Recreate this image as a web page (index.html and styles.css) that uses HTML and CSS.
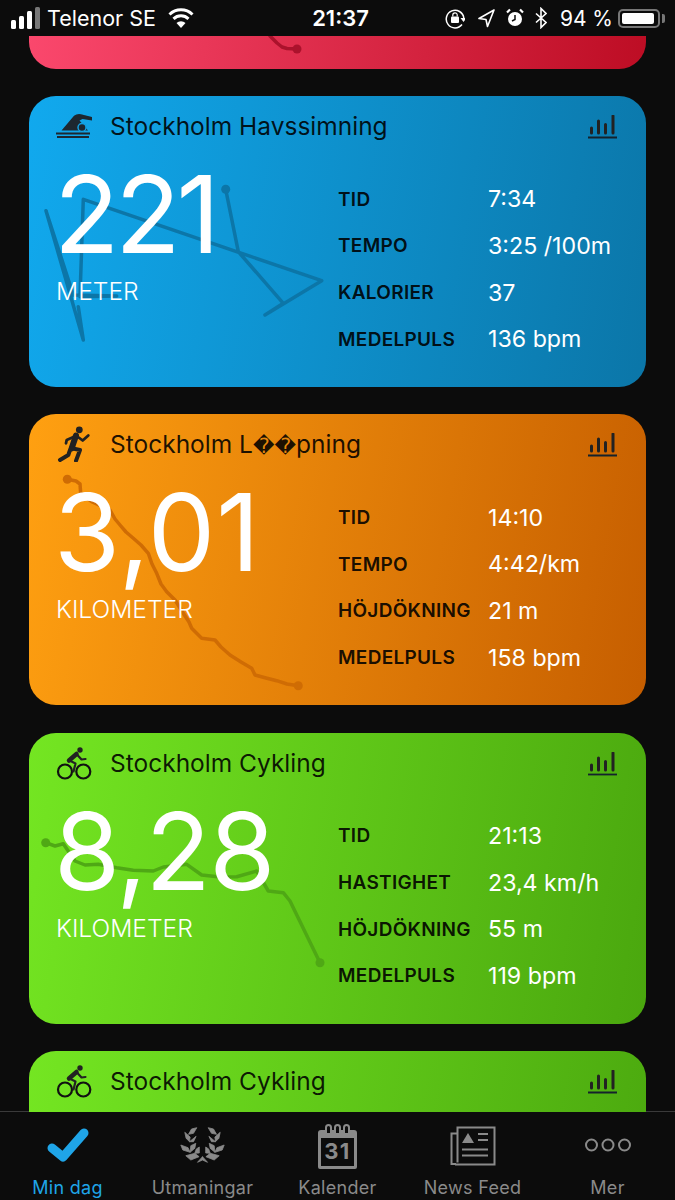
FILE: index.html
```html
<!DOCTYPE html>
<html lang="en">
<head>
    <meta charset="UTF-8">
    <meta name="viewport" content="width=device-width, initial-scale=1.0">
    <title>Min dag</title>
    <link rel="stylesheet" href="styles.css">
</head>
<body>
    <svg class="defs" width="0" height="0">
        <symbol id="chart" viewBox="0 0 30 24">
            <path d="M4.500 18v-5M11.500 18V6M18.500 18V9.500M26 18V1" fill="none" stroke="#222" stroke-width="3" stroke-linecap="round"/>
            <path d="M1 22.500h29" stroke="#14222c" stroke-width="1.800"/>
        </symbol>
        <symbol id="bike" viewBox="0 0 36 36">
            <circle cx="9" cy="26.500" r="7" fill="none" stroke="#111" stroke-width="2.200"/>
            <circle cx="27.300" cy="26.500" r="7" fill="none" stroke="#111" stroke-width="2.200"/>
            <circle cx="24" cy="5" r="2.700" fill="#222"/>
            <path d="M20.500 9L13 15.500" stroke="#222" stroke-width="4.500" stroke-linecap="round"/>
            <path d="M13.500 15.500l6 3-2 8M20.500 9l5 5.500 4-.5" fill="none" stroke="#222" stroke-width="2.200" stroke-linecap="round" stroke-linejoin="round"/>
        </symbol>
    </svg>

    <!-- Status bar -->
    <div class="status">
        <div class="status-left">
            <svg class="signal" width="30" height="24" viewBox="0 0 30 24">
                <rect x="0" y="14" width="5" height="9" rx="1.500" fill="#fff"/>
                <rect x="8" y="10" width="5" height="13" rx="1.500" fill="#fff"/>
                <rect x="16" y="5" width="5" height="18" rx="1.500" fill="#fff"/>
                <rect x="24" y="1" width="5" height="22" rx="1.500" fill="#777"/>
            </svg>
            <span class="carrier">Telenor SE</span>
            <svg class="wifi" width="26" height="22" viewBox="0 0 26 22">
                <path d="M1.500 7.500a16.500 16.500 0 0 1 23 0M5.500 11.800a11 11 0 0 1 15 0" fill="none" stroke="#fff" stroke-width="3"/>
                <path d="M13 21l-4.500-5a6.500 6.500 0 0 1 9 0z" fill="#fff"/>
            </svg>
        </div>
        <div class="clock">21:37</div>
        <div class="status-right">
            <svg class="lock" width="20" height="22" viewBox="0 0 20 22">
                <path d="M17 17.500A8.800 8.800 0 1 1 18.800 11" fill="none" stroke="#fff" stroke-width="1.500"/>
                <path d="M15.500 11h6l-3 4z" fill="#fff"/>
                <rect x="6" y="9.500" width="8" height="6.500" rx="1" fill="#fff"/>
                <path d="M7.800 9.500V8a2.200 2.200 0 0 1 4.400 0v1.500" fill="none" stroke="#fff" stroke-width="1.200"/>
            </svg>
            <svg class="locate" width="17" height="20" viewBox="0 0 17 20">
                <path d="M16 2L1 10.500l7 1 1.500 7z" fill="none" stroke="#fff" stroke-width="1.600" stroke-linejoin="round"/>
            </svg>
            <svg class="alarm" width="18" height="20" viewBox="0 0 18 20">
                <circle cx="9" cy="11" r="7" fill="#fff"/>
                <path d="M9 7v4.500l-3 1.500" fill="none" stroke="#0c0c0c" stroke-width="1.500"/>
                <path d="M1 4.500l3-3M17 4.500l-3-3" stroke="#fff" stroke-width="2.200"/>
            </svg>
            <svg class="bluetooth" width="12" height="22" viewBox="0 0 12 22">
                <path d="M1 6.500l10 9L6 20.500v-19l5 5-10 9" fill="none" stroke="#fff" stroke-width="1.600"/>
            </svg>
            <span class="percent">94 %</span>
            <div class="battery"><div class="battery-level"></div></div>
        </div>
    </div>

    <div class="feed">
        <div class="feed-list">

            <!-- Earlier activity, mostly scrolled away -->
            <div class="card card-red">
                <svg class="route" viewBox="0 0 617 291">
                    <path d="M241 258l7 7 5 4 5 1.500 10 .5" stroke="#ab122c"/>
                    <circle cx="268" cy="271" r="4.500" fill="#ab122c"/>
                </svg>
            </div>

            <!-- Swim -->
            <div class="card card-blue">
                <svg class="route" viewBox="0 0 617 291">
                    <path d="M196.700 93.300L209.300 155.700 254.300 207.300 236 219 292.700 184.700 54.300 103.300 51 200.700 87.700 200 44.300 199 17 114.700 54.300 244 49.300 210.700" stroke="#0c76a8"/>
                    <circle cx="196.700" cy="93.300" r="4.500" fill="#0c76a8"/>
                </svg>
                <div class="card-head">
                    <svg class="sport" viewBox="0 0 36 36">
                        <path d="M5.500 22.500L18 7.800Q21 5.400 25 6.200L36 9v3.500L26.500 11l-3 1.500L32 22.500z" fill="#1d2730"/>
                        <circle cx="26" cy="19.500" r="4" fill="#1d2730" stroke="#129fe0" stroke-width="1.500"/>
                        <path d="M0 25.500h34M1 29h32" stroke="#1d2730" stroke-width="1.800"/>
                    </svg>
                    <div class="card-title">Stockholm Havssimning</div>
                    <svg class="chart"><use href="#chart"/></svg>
                </div>
                <div class="card-body">
                    <div class="total">
                        <div class="total-value total-value-short">221</div>
                        <div class="total-unit">METER</div>
                    </div>
                    <div class="stats">
                        <div class="stat-label">TID</div><div class="stat-value">7:34</div>
                        <div class="stat-label">TEMPO</div><div class="stat-value">3:25 /100m</div>
                        <div class="stat-label">KALORIER</div><div class="stat-value">37</div>
                        <div class="stat-label">MEDELPULS</div><div class="stat-value">136 bpm</div>
                    </div>
                </div>
            </div>

            <!-- Run -->
            <div class="card card-orange">
                <svg class="route" viewBox="0 0 617 291">
                    <path d="M38.300 65.300L47 67 51 70 51.700 79.300 62.700 87.700 72 92 81 96 86 105 91 111 97 118 104.300 124.300 112 131 119.300 139.300 123 150 127.700 159.300 132 170 137.700 177.700 146 186 154.300 199.300 160 208 162.700 214.300 172.700 224.300 186 226 192 233 201 241 212 248 222.700 254.300 226 261 237 264 247.700 266.700 258 270 269.300 271.700" stroke="#cf6c04"/>
                    <circle cx="38.300" cy="65.300" r="4.500" fill="#cf6c04"/>
                    <circle cx="269.300" cy="271.700" r="4.500" fill="#cf6c04"/>
                </svg>
                <div class="card-head">
                    <svg class="sport" viewBox="0 0 36 36">
                        <circle cx="23.300" cy="3.800" r="3.400" fill="#222"/>
                        <path d="M20 9.500L15.700 22.300" stroke="#222" stroke-width="6" stroke-linecap="round"/>
                        <path d="M20 9.500l6.700 5 5.600-5M18 10.700L10.700 14 10 17.300" fill="none" stroke="#222" stroke-width="2.800" stroke-linecap="round" stroke-linejoin="round"/>
                        <path d="M15.700 22.300L24 24 20 34.700M14 24l-1.700 5L4 34" fill="none" stroke="#222" stroke-width="4" stroke-linecap="round" stroke-linejoin="round"/>
                    </svg>
                    <div class="card-title">Stockholm L<span class="bad-char">&#xFFFD;&#xFFFD;</span>pning</div>
                    <svg class="chart"><use href="#chart"/></svg>
                </div>
                <div class="card-body">
                    <div class="total">
                        <div class="total-value total-value-wide">3,01</div>
                        <div class="total-unit">KILOMETER</div>
                    </div>
                    <div class="stats">
                        <div class="stat-label">TID</div><div class="stat-value">14:10</div>
                        <div class="stat-label">TEMPO</div><div class="stat-value">4:42/km</div>
                        <div class="stat-label">HÖJDÖKNING</div><div class="stat-value">21 m</div>
                        <div class="stat-label">MEDELPULS</div><div class="stat-value">158 bpm</div>
                    </div>
                </div>
            </div>

            <!-- Ride -->
            <div class="card card-green">
                <svg class="route" viewBox="0 0 617 291">
                    <path d="M16.700 109.700L26 113 34.300 110.700 46 128 56 132 69.300 131.300 87.700 134.700 104.300 137.300 124.300 138 134.300 134 157.700 131.300 172.700 142 191 144 207.700 143.700 227.700 138 239.300 158 254.300 159.700 261 168 291 229.700" stroke="#4fa815"/>
                    <circle cx="16.700" cy="109.700" r="4.500" fill="#4fa815"/>
                    <circle cx="291" cy="229.700" r="4.500" fill="#4fa815"/>
                </svg>
                <div class="card-head">
                    <svg class="sport"><use href="#bike"/></svg>
                    <div class="card-title">Stockholm Cykling</div>
                    <svg class="chart"><use href="#chart"/></svg>
                </div>
                <div class="card-body">
                    <div class="total">
                        <div class="total-value">8,28</div>
                        <div class="total-unit">KILOMETER</div>
                    </div>
                    <div class="stats">
                        <div class="stat-label">TID</div><div class="stat-value">21:13</div>
                        <div class="stat-label">HASTIGHET</div><div class="stat-value">23,4 km/h</div>
                        <div class="stat-label">HÖJDÖKNING</div><div class="stat-value">55 m</div>
                        <div class="stat-label">MEDELPULS</div><div class="stat-value">119 bpm</div>
                    </div>
                </div>
            </div>

            <!-- Second ride, cut off by the tab bar -->
            <div class="card card-green">
                <div class="card-head">
                    <svg class="sport"><use href="#bike"/></svg>
                    <div class="card-title">Stockholm Cykling</div>
                    <svg class="chart"><use href="#chart"/></svg>
                </div>
            </div>
        </div>
    </div>

    <!-- Tab bar -->
    <div class="tabs">
        <div class="tab tab-active">
            <svg class="tab-icon" width="46" height="44" viewBox="0 0 46 44">
                <path d="M7 23l11 9L39 8" fill="none" stroke="#1fa5e8" stroke-width="9" stroke-linecap="round" stroke-linejoin="round"/>
            </svg>
            <span>Min dag</span>
        </div>
        <div class="tab">
            <svg class="tab-icon" width="45" height="44" viewBox="0 0 44.400 44">
                <g id="laurel" fill="#8a8a8a" stroke="#8a8a8a" stroke-width=".8" stroke-linejoin="round">
                    <path d="M16.500 2.700L11.200 4 8.200 9.300 13.200 8.300z"/>
                    <path d="M4.500 7.300L5.800 13.300 9.200 16.700 9.800 12z"/>
                    <path d="M9.200 16.700L15.800 11.300 13.200 16.700z"/>
                    <path d="M.5 20L2.500 25 9.800 27.300 7.800 22.700z"/>
                    <path d="M9.800 27.300L10.500 20.700 15.500 18.300 14.500 23.300z"/>
                    <path d="M5.500 30.700L10.500 35 18.800 31.700 14.500 28.300z"/>
                    <path d="M14.500 28.300L16 24 19 22 19 28z"/>
                    <path d="M17.200 37.300L22.200 31.700 22.200 35z"/>
                </g>
                <use href="#laurel" transform="matrix(-1 0 0 1 44.400 0)"/>
            </svg>
            <span>Utmaningar</span>
        </div>
        <div class="tab">
            <div class="cal">
                <div class="cal-rings"><i></i><i></i><i></i></div>
                <div class="cal-page">31</div>
            </div>
            <span>Kalender</span>
        </div>
        <div class="tab">
            <svg class="tab-icon" width="46" height="44" viewBox="0 0 46 44">
                <path d="M7.500 8.500H1.500v30.500h4.500M7.500 37.500V2.500h37v37H5" fill="none" stroke="#8a8a8a" stroke-width="2"/>
                <path d="M12 18l6-10 6 10z" fill="#8a8a8a"/>
                <path d="M28 9h10M28 15h10M12 24.500h26M12 30.500h26" stroke="#8a8a8a" stroke-width="2"/>
            </svg>
            <span>News Feed</span>
        </div>
        <div class="tab">
            <svg class="tab-icon" width="46" height="44" viewBox="0 0 46 44">
                <g fill="none" stroke="#8a8a8a" stroke-width="2">
                    <circle cx="6.500" cy="20" r="5.500"/>
                    <circle cx="23" cy="20" r="5.500"/>
                    <circle cx="39.500" cy="20" r="5.500"/>
                </g>
            </svg>
            <span>Mer</span>
        </div>
    </div>
</body>
</html>
```

FILE: styles.css
```css
body {
    margin: 0;
    height: 1200px;
    overflow: hidden;
    background-color: #0c0c0c;
    font-family: Inter, "DejaVu Sans", sans-serif;
    color: #fff;
}

.defs {
    position: absolute;
}

/* Status bar */
.status {
    height: 36px;
    display: grid;
    grid-template-columns: 1fr auto 1fr;
    align-items: center;
    padding: 0 10px 0 11px;
    font-size: 21.5px;
}

.status-left,
.status-right {
    display: flex;
    align-items: center;
}

.status-right {
    justify-content: flex-end;
}

.carrier {
    margin-left: 6px;
}

.wifi {
    margin-left: 12px;
}

.clock {
    font-weight: 600;
    font-size: 22px;
    margin-left: 5px;
}

.locate {
    margin-left: 13px;
}

.alarm,
.bluetooth {
    margin-left: 11px;
}

.percent {
    margin: 0 5px 0 13px;
    font-size: 21px;
}

.battery {
    width: 42px;
    height: 19px;
    box-sizing: border-box;
    border: 2px solid #777;
    border-radius: 5px;
    padding: 2px;
    margin-right: 5px;
    position: relative;
}

.battery::after {
    content: "";
    position: absolute;
    right: -7px;
    top: 3px;
    width: 3px;
    height: 9px;
    border-radius: 0 2px 2px 0;
    background-color: #777;
}

.battery-level {
    width: 94%;
    height: 100%;
    background-color: #fff;
    border-radius: 2px;
}

/* Cards */
.feed {
    height: 1076px;
    overflow: hidden;
    background: linear-gradient(to top, #3a3a3a 1px, #0c0c0c 1px);
}

.feed-list {
    display: flex;
    flex-direction: column;
    gap: 27.33px;
    margin-top: -258.33px;
    padding: 0 29px;
}

.card {
    height: 291px;
    flex: none;
    position: relative;
    border-radius: 27px;
    overflow: hidden;
}

.card-red {
    background: linear-gradient(100deg, #ff4c72, #bd0d24);
}

.card-blue {
    background: linear-gradient(100deg, #11a9ee, #0b76a8);
}

.card-orange {
    background: linear-gradient(100deg, #ffa011, #c65e00);
}

.card-green {
    background: linear-gradient(100deg, #74e622, #4aa70e);
}

.route {
    position: absolute;
    left: 0;
    top: 0;
    width: 617px;
    height: 291px;
}

.route path {
    fill: none;
    stroke-width: 3.5;
    stroke-linejoin: round;
    stroke-linecap: round;
}

.card-head {
    position: relative;
    height: 60px;
    display: flex;
    align-items: center;
    padding: 0 29px 0 27px;
}

.sport {
    width: 36px;
    height: 36px;
    flex: none;
}

.card-title {
    flex: 1;
    margin-left: 18px;
    font-size: 24.5px;
    color: rgba(0, 0, 0, 0.88);
}

.bad-char {
    font-size: 21px;
}

.chart {
    width: 30px;
    height: 24px;
    flex: none;
    margin-top: 2px;
}

.card-body {
    position: relative;
    display: flex;
    padding-left: 27px;
}

.total {
    width: 282px;
    flex: none;
}

.total-value {
    margin: 13px 0 0 -2px;
    height: 90px;
    line-height: 90px;
    font-size: 107px;
    font-weight: 400;
    letter-spacing: -1.500px;
}

.total-value-short {
    letter-spacing: -4px;
}

.total-value-wide {
    letter-spacing: 1px;
}

.total-unit {
    margin-top: 17px;
    line-height: 30px;
    font-size: 24.6px;
    font-weight: 300;
}

.stats {
    display: grid;
    grid-template-columns: 150px 1fr;
    grid-auto-rows: 46.67px;
    align-items: center;
    margin-top: 20px;
}

.stat-label {
    font-size: 19px;
    font-weight: 600;
    letter-spacing: 0.3px;
    color: rgba(0, 0, 0, 0.9);
}

.stat-value {
    font-size: 23.2px;
}

/* Tab bar */
.tabs {
    height: 88px;
    display: flex;
}

.tab {
    flex: 1;
    display: flex;
    flex-direction: column;
    align-items: center;
    color: #8a8a8a;
    font-size: 18px;
    letter-spacing: 0.3px;
}

.tab-active {
    color: #1fa5e8;
}

.tab-icon {
    display: block;
    margin-top: 13px;
    height: 44px;
}

.tab span {
    margin-top: 8px;
}

.cal {
    width: 39px;
    height: 39px;
    margin-top: 18px;
    position: relative;
    box-sizing: border-box;
    border: 3px solid #8a8a8a;
    border-top-width: 8px;
    border-radius: 3px 3px 2px 2px;
}

.cal-rings {
    position: absolute;
    top: -14px;
    left: 4px;
    right: 4px;
    display: flex;
    justify-content: space-between;
}

.cal-rings i {
    width: 7px;
    height: 11px;
    box-sizing: border-box;
    border: 2px solid #8a8a8a;
    border-radius: 4px 4px 0 0;
    background-color: #0c0c0c;
}

.cal-page {
    text-align: center;
    font-size: 22px;
    font-weight: 700;
    letter-spacing: 1.5px;
    line-height: 27px;
}
```
